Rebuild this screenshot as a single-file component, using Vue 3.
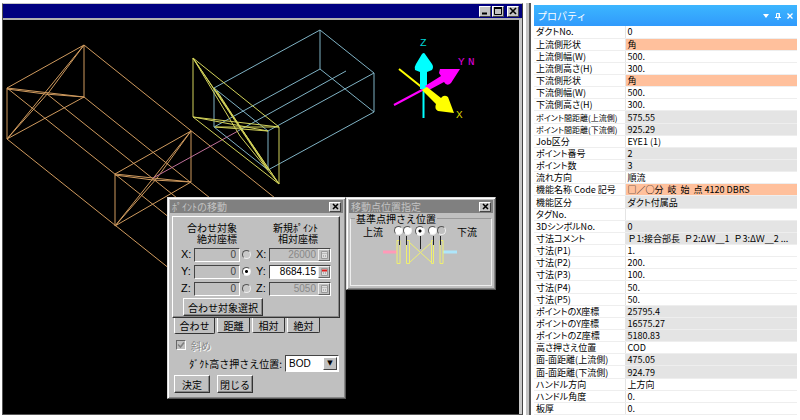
<script setup>
import { ref } from 'vue'

const axis = ref('Y')
const skewed = ref(true)
const hold = ref('BOD')
const anchor = ref(2)

const axes = [
  { name: 'X', current: '0', next: '26000' },
  { name: 'Y', current: '0', next: '8684.15' },
  { name: 'Z', current: '0', next: '5050' },
]
const tabs = ['合わせ', '距離', '相対', '絶対']
const tab = ref('合わせ')

const properties = [
  ['ダクトNo.', '0', ''],
  ['上流側形状', '角', 'key'],
  ['上流側幅(W)', '500.', ''],
  ['上流側高さ(H)', '300.', ''],
  ['下流側形状', '角', 'key'],
  ['下流側幅(W)', '500.', ''],
  ['下流側高さ(H)', '300.', ''],
  ['ポイント間距離(上流側)', '575.55', 'locked'],
  ['ポイント間距離(下流側)', '925.29', 'locked'],
  ['Job区分', 'EYE1 (1)', ''],
  ['ポイント番号', '2', 'locked'],
  ['ポイント数', '3', 'locked'],
  ['流れ方向', '順流', ''],
  ['機能名称 Code 記号', '□／○分  岐  始  点 4120 DBRS', 'key wide'],
  ['機能区分', 'ダクト付属品', 'locked'],
  ['タグNo.', '', ''],
  ['3DシンボルNo.', '0', 'locked'],
  ['寸法コメント', 'Ｐ1:接合部長  Ｐ2:ΔＷ＿1  Ｐ3:ΔＷ＿2 ...', 'locked wide'],
  ['寸法(P1)', '1.', ''],
  ['寸法(P2)', '200.', ''],
  ['寸法(P3)', '100.', ''],
  ['寸法(P4)', '50.', ''],
  ['寸法(P5)', '50.', ''],
  ['ポイントのX座標', '25795.4', 'locked'],
  ['ポイントのY座標', '16575.27', 'locked'],
  ['ポイントのZ座標', '5180.83', 'locked'],
  ['高さ押さえ位置', 'COD', ''],
  ['面-面距離(上流側)', '475.05', 'locked'],
  ['面-面距離(下流側)', '924.79', 'locked'],
  ['ハンドル方向', '上方向', ''],
  ['ハンドル角度', '0.', ''],
  ['板厚', '0.', ''],
]
</script>

<template>
  <main class="workspace">
    <section class="cad">
      <header class="cad-title">
        <button class="sys" aria-label="最小化"><svg width="8" height="8"><path d="M1 6.500h5" stroke="#000" stroke-width="2" /></svg></button>
        <button class="sys" aria-label="最大化"><svg width="8" height="8"><path d="M.5 1v6.500h7V1" stroke="#000" fill="none" /><path d="M0 1h8" stroke="#000" stroke-width="2" /></svg></button>
        <button class="sys close" aria-label="閉じる"><svg width="8" height="8"><path d="M1 1l6 6M7 1L1 7" stroke="#000" stroke-width="1.600" /></svg></button>
      </header>

      <div class="scene">
        <svg class="drawing" aria-hidden="true">
          <g transform="translate(-3 -20)" fill="none">
            <g stroke="#cf9a5e" stroke-width="1">
              <path d="M84 45L7 88V139L84 97ZM84 45L7 139M84 45L49 92L7 139M7 88L84 97M7 89L45 94L84 97" />
              <path d="M191 131L115 174V226L191 182ZM191 131L115 226M191 131L157 178L115 226M115 174L191 182M115 175L153 180L191 182" />
              <path d="M84 45L280 202M84 97L215 202M7 88L180 226M7 139L175 273M47 94L182 202" />
            </g>
            <path d="M153 178L238 131" stroke="#c0709a" />
            <g stroke="#7fb2c4">
              <path d="M214 88L320 30L374 73L268 131ZM214 127L320 69L374 112L268 170ZM214 88V127M320 30V69M374 73V112M268 131V170M238 131L346 71" />
            </g>
            <g stroke="#d2d25a">
              <path d="M193 58V117L279 184V127Z" />
              <path d="M193 58L279 184M193 58L268 170M214 88L279 184M217 91L268 170M193 58L240 136L279 184" />
              <path d="M193 117L279 127M193 117L268 131M215 127L279 127M215 127L268 131" />
            </g>
            <path d="M423.500 89V118" stroke="#0ff" stroke-width="2" />
            <path d="M394 105L424 89" stroke="#f0f" stroke-width="2" />
            <path d="M399 69L424 89" stroke="#ff0" stroke-width="2" />
            <path d="M420 89V72L415 70Q414 67 416 64L422 54Q424 52 425 54L432 64Q434 67 432 70L427 72V89Z" fill="#0ff" />
            <path d="M425 86L441 76L439 73L440 69L460 69L451 83Q447 87 444 82L429 90Z" fill="#f0f" />
            <path d="M422 90L427 87L441 98Q444 94 448 97L454 113L438 111Q434 109 436 104Z" fill="#ff0" />
            <g class="axis-names" stroke="none">
              <text x="420" y="46" fill="#00d5d5">Z</text>
              <text x="458" y="65" fill="#e000e0">Y</text>
              <text x="468" y="65" fill="#e000e0">N</text>
              <text x="456" y="118" fill="#d5d500">X</text>
            </g>
          </g>
        </svg>

        <section class="dialog move">
          <header class="dialog-title">
            <h2>ﾎﾟｲﾝﾄの移動</h2>
            <button class="sys" aria-label="閉じる"><svg width="7" height="7"><path d="M1 1l5 5M6 1L1 6" stroke="#000" stroke-width="1.500" /></svg></button>
          </header>
          <div class="page">
            <div class="heads">
              <p>合わせ対象<br>絶対座標</p>
              <p>新規ﾎﾟｲﾝﾄ<br>相対座標</p>
            </div>
            <div v-for="a in axes" :key="a.name" class="axis-row">
              <label :for="'cur' + a.name">{{ a.name }}:</label>
              <input :id="'cur' + a.name" class="field" type="text" :value="a.current" readonly>
              <input v-model="axis" class="radio" type="radio" name="axis" :value="a.name" :aria-label="a.name">
              <label :for="'new' + a.name">{{ a.name }}:</label>
              <div class="entry" :class="{ on: axis === a.name }">
                <input :id="'new' + a.name" type="text" :value="a.next" :disabled="axis !== a.name">
                <button class="calc" aria-label="電卓"><svg width="7" height="8"><path d="M.5.5h6v7h-6z" class="calc-body" /><path d="M1 2.500h5" class="calc-bar" /><path d="M2 5h1m1 0h1" stroke="#888" /></svg></button>
              </div>
            </div>
            <button class="push pick">合わせ対象選択</button>
          </div>
          <nav class="tabs">
            <button v-for="t in tabs" :key="t" :class="{ active: tab === t }" @click="tab = t">{{ t }}</button>
          </nav>
          <div class="options">
            <label class="check">
              <input v-model="skewed" type="checkbox" disabled>
              <svg v-if="skewed" class="tick" width="10" height="10"><path d="M2 4.500L4.500 7L8 2.500" fill="none" stroke="#808080" stroke-width="1.600" /></svg>
              <span>斜め</span>
            </label>
            <div class="hold">
              <label for="hold">ﾀﾞｸﾄ高さ押さえ位置:</label>
              <div class="combo">
                <select id="hold" v-model="hold"><option>BOD</option><option>COD</option><option>TOD</option></select>
              </div>
            </div>
            <div class="actions">
              <button class="push">決定</button>
              <button class="push">閉じる</button>
            </div>
          </div>
        </section>

        <section class="dialog anchor">
          <header class="dialog-title">
            <h2>移動点位置指定</h2>
            <button class="sys" aria-label="閉じる"><svg width="7" height="7"><path d="M1 1l5 5M6 1L1 6" stroke="#000" stroke-width="1.500" /></svg></button>
          </header>
          <fieldset>
            <legend>基準点押さえ位置</legend>
            <div class="flow">
              <span>上流</span>
              <div class="picker">
                <div class="radios">
                  <input v-for="n in 5" :key="n" v-model="anchor" class="radio" :class="'r' + n" type="radio" name="anchor" :value="n - 1" :aria-label="'位置' + n">
                </div>
                <svg width="74" height="32" viewBox="0 0 74 32" fill="none" aria-hidden="true">
                  <path d="M0 16h14" stroke="#ff9ab8" stroke-width="3" />
                  <path d="M60 16h14" stroke="#aee6fb" stroke-width="3" />
                  <path d="M14 4.500h3v23h-3zM23.500 4.500h3v23h-3zM48.500 4.500h2v23h-2zM57 4.500h3v23h-3zM26 6L49 27M49 6L26 27" stroke="#efef70" />
                  <path d="M16.500 0v9M23.500 0v9M37.500 0v13M50.500 0v9M57.500 0v9" stroke="#222" />
                </svg>
              </div>
              <span>下流</span>
            </div>
          </fieldset>
        </section>
      </div>
    </section>

    <div class="divider"></div>

    <aside class="props">
      <header class="props-title">
        <h2>プロパティ</h2>
        <button aria-label="メニュー"><svg width="8" height="8"><path d="M1 2h6L4 6z" fill="#fff" /></svg></button>
        <button aria-label="固定"><svg width="8" height="8" fill="none" stroke="#fff"><path d="M2.500 5V1.500h3V5M1 5.500h6M4 5v3M5 1v4" /></svg></button>
        <button aria-label="閉じる"><svg width="8" height="8"><path d="M1.500 1.500l5 5M6.500 1.500l-5 5" stroke="#fff" stroke-width="1.300" /></svg></button>
      </header>
      <table>
        <tbody>
          <tr v-for="[name, value, kind] in properties" :key="name">
            <th scope="row" :class="{ long: name.length > 11 && name.startsWith('ポ') }">{{ name }}</th>
            <td :class="kind">{{ value }}</td>
          </tr>
        </tbody>
      </table>
    </aside>
  </main>
</template>

<style>
body {
  margin: 0;
  background: #fff;
}
</style>

<style scoped>
* {
  box-sizing: border-box;
}

.workspace {
  display: grid;
  grid-template-columns: minmax(0, 1fr) 5px 263px;
  column-gap: 3px;
  min-height: 100vh;
  padding: 3px 3px 5px 2px;
  font-family: "Noto Sans CJK JP", sans-serif;
  font-size: 10px;
  line-height: 11px;
  color: #000;
}

button,
input,
select {
  margin: 0;
  padding: 0;
  font: inherit;
  color: inherit;
}

svg {
  display: block;
}

h2,
p {
  margin: 0;
  font-size: 10px;
  font-weight: 400;
}

.cad {
  display: flex;
  flex-direction: column;
  border-top: 1px solid #c8c8c8;
  border-left: 1px solid #555;
  border-right: 1px solid #444;
  border-bottom: 1px solid #555;
}

.cad-title {
  display: flex;
  justify-content: flex-end;
  align-items: center;
  gap: 1px;
  height: 14px;
  padding-right: 3px;
  background: #000080;
}

.sys {
  display: grid;
  place-items: center;
  width: 12px;
  height: 11px;
  background: #c4c4c4;
  border: 1px solid;
  border-color: #fff #444 #444 #fff;
}

.sys.close {
  margin-left: 2px;
}

.scene {
  position: relative;
  flex: 1;
  overflow: hidden;
  background: #000;
  border-top: 2px solid #b0b0b0;
  border-right: 3px solid #c8c8c8;
}

.drawing {
  position: absolute;
  inset: 0;
  width: 100%;
  height: 100%;
}

.axis-names {
  font: 11px "Liberation Mono", monospace;
}

.dialog {
  position: absolute;
  background: #c0c0c0;
  border: 1px solid;
  border-color: #ddd #555 #555 #ddd;
  box-shadow: inset 1px 1px #fff, inset -1px -1px #888;
  padding: 2px;
}

.move {
  left: 164px;
  top: 177px;
  width: 179px;
  padding-bottom: 5px;
}

.anchor {
  left: 343px;
  top: 177px;
  width: 150px;
  height: 93px;
}

.dialog-title {
  display: flex;
  justify-content: space-between;
  align-items: center;
  height: 13px;
  padding: 0 2px;
  background: #808080;
  color: #c4c4c4;
}

.dialog-title .sys {
  height: 10px;
}

.page {
  margin: 3px 3px 0 2px;
  padding: 5px 8px 1px;
  border: 1px solid;
  border-color: #fff #333 #333 #fff;
  box-shadow: inset -1px -1px #888;
}

.heads {
  display: flex;
  gap: 28px;
  padding: 0 2px 2px 6px;
}

.heads p {
  text-align: right;
}

.heads p:first-child {
  width: 50px;
}

.heads p:last-child {
  flex: 1;
  padding-right: 11px;
}

.axis-row {
  display: flex;
  align-items: center;
  height: 17px;
}

.axis-row,
.combo {
  font-family: "Liberation Sans", sans-serif;
}

.axis-row label {
  width: 13px;
  font-size: 11px;
}

.field,
.entry {
  height: 14px;
  border: 1px solid;
  border-color: #444 #fff #fff #444;
  background: #c0c0c0;
}

.field {
  width: 46px;
  padding-right: 3px;
  text-align: right;
  color: #444;
  border-radius: 0;
}

.radio {
  appearance: none;
  flex: none;
  width: 9px;
  height: 9px;
  border: 1px solid;
  border-color: #555 #eee #eee #555;
  border-radius: 50%;
  background: #c8c8c8;
}

.radio:checked {
  background: radial-gradient(circle, #000 0 1px, #fff 2px);
}

.axis-row .radio {
  margin: 0 5px 0 2px;
}

.entry {
  display: flex;
  flex: none;
  width: 62px;
  color: #888;
}

.entry input {
  flex: 1;
  min-width: 0;
  padding-right: 2px;
  border: 0;
  background: transparent;
  color: #888;
  text-align: right;
}

.entry.on {
  background: #fff;
}

.entry.on input {
  color: #000;
}

.calc {
  display: grid;
  place-items: center;
  width: 12px;
  background: #c0c0c0;
  border: 1px solid;
  border-color: #eee #666 #666 #eee;
}

.calc-body {
  fill: #ddd;
  stroke: #999;
}

.calc-bar {
  stroke: #bbb;
}

.on .calc-bar {
  stroke: #e02020;
  stroke-width: 2;
}

.push {
  height: 18px;
  border: 1px solid;
  border-color: #fff #333 #333 #fff;
  box-shadow: inset -1px -1px #888;
  background: #c0c0c0;
}

.pick {
  display: block;
  width: 80px;
  margin: 1px 0 0 2px;
}

.tabs {
  display: flex;
  gap: 2px;
  height: 16px;
  padding-left: 4px;
}

.tabs button {
  width: 33px;
  height: 15px;
  background: #c0c0c0;
  border: 1px solid #333;
  border-top: 0;
  border-left-color: #fff;
  border-radius: 0 0 2px 2px;
}

.tabs .active {
  width: 41px;
  height: 16px;
}

.options {
  display: grid;
  gap: 3px;
  padding: 4px 4px 0;
}

.check {
  position: relative;
  display: flex;
  align-items: center;
  gap: 5px;
  height: 14px;
  padding-left: 2px;
  color: #888;
  text-shadow: 1px 1px #fff;
}

.check input {
  appearance: none;
  width: 10px;
  height: 10px;
  border: 1px solid;
  border-color: #666 #fff #fff #666;
}

.tick {
  position: absolute;
  left: 2px;
  top: 2px;
}

.hold {
  display: flex;
  justify-content: flex-end;
  align-items: center;
  gap: 3px;
}

.combo {
  position: relative;
  width: 54px;
  height: 17px;
  border: 1px solid;
  border-color: #444 #fff #fff #444;
  background: #fff;
}

.combo select {
  appearance: none;
  width: 100%;
  height: 100%;
  padding-left: 3px;
  border: 0;
  background: transparent;
}

.combo::after {
  content: "▼";
  position: absolute;
  inset: 1px 1px 1px auto;
  width: 12px;
  border: 1px solid;
  border-color: #fff #444 #444 #fff;
  background: #c0c0c0;
  font: 7px/11px "DejaVu Sans", sans-serif;
  text-align: center;
  pointer-events: none;
}

.actions {
  display: flex;
  gap: 7px;
}

.actions .push {
  width: 36px;
}

fieldset {
  height: 73px;
  margin: 0 1px;
  padding: 0 14px 0 12px;
  border: 1px solid #eee;
  border-top-color: #999;
}

legend {
  margin-left: -8px;
  padding: 0 1px;
}

.flow {
  display: flex;
  justify-content: space-between;
  padding-top: 2px;
  white-space: nowrap;
}

.picker {
  flex: none;
  width: 74px;
}

.radios {
  display: flex;
  justify-content: center;
  height: 10px;
}

.radios .radio {
  background-color: #fff;
}

.radios .r3 {
  margin: 0 3px;
  width: 10px;
  height: 10px;
}

.radios .r5 {
  background-color: #c0c0c0;
}

.divider {
  border-left: 3px solid #c4c4c4;
  border-right: 2px solid #555;
}

.props {
  display: flex;
  flex-direction: column;
  padding-top: 2px;
}

.props-title {
  display: flex;
  align-items: center;
  gap: 4px;
  height: 21px;
  padding: 0 3px;
  background: linear-gradient(#3cb6ff, #309afc);
  color: #fff;
}

.props-title h2 {
  flex: 1;
}

.props-title button {
  background: none;
  border: 0;
}

table {
  flex: 1;
  width: 100%;
  border-collapse: collapse;
  table-layout: fixed;
  font-size: 9px;
  line-height: 11px;
  font-feature-settings: "palt";
}

th,
td {
  height: 12px;
  padding: 0 2px;
  border-bottom: 1px solid #eee;
  font-weight: 400;
  text-align: left;
  white-space: pre;
  overflow: hidden;
}

th {
  width: 91px;
  border-right: 1px solid #e4e4e4;
}

.long {
  font-size: 8px;
}

.locked {
  background: #e4e4e4;
}

.key {
  background: #ffc09c;
}

.wide {
  font-feature-settings: normal;
}
</style>
